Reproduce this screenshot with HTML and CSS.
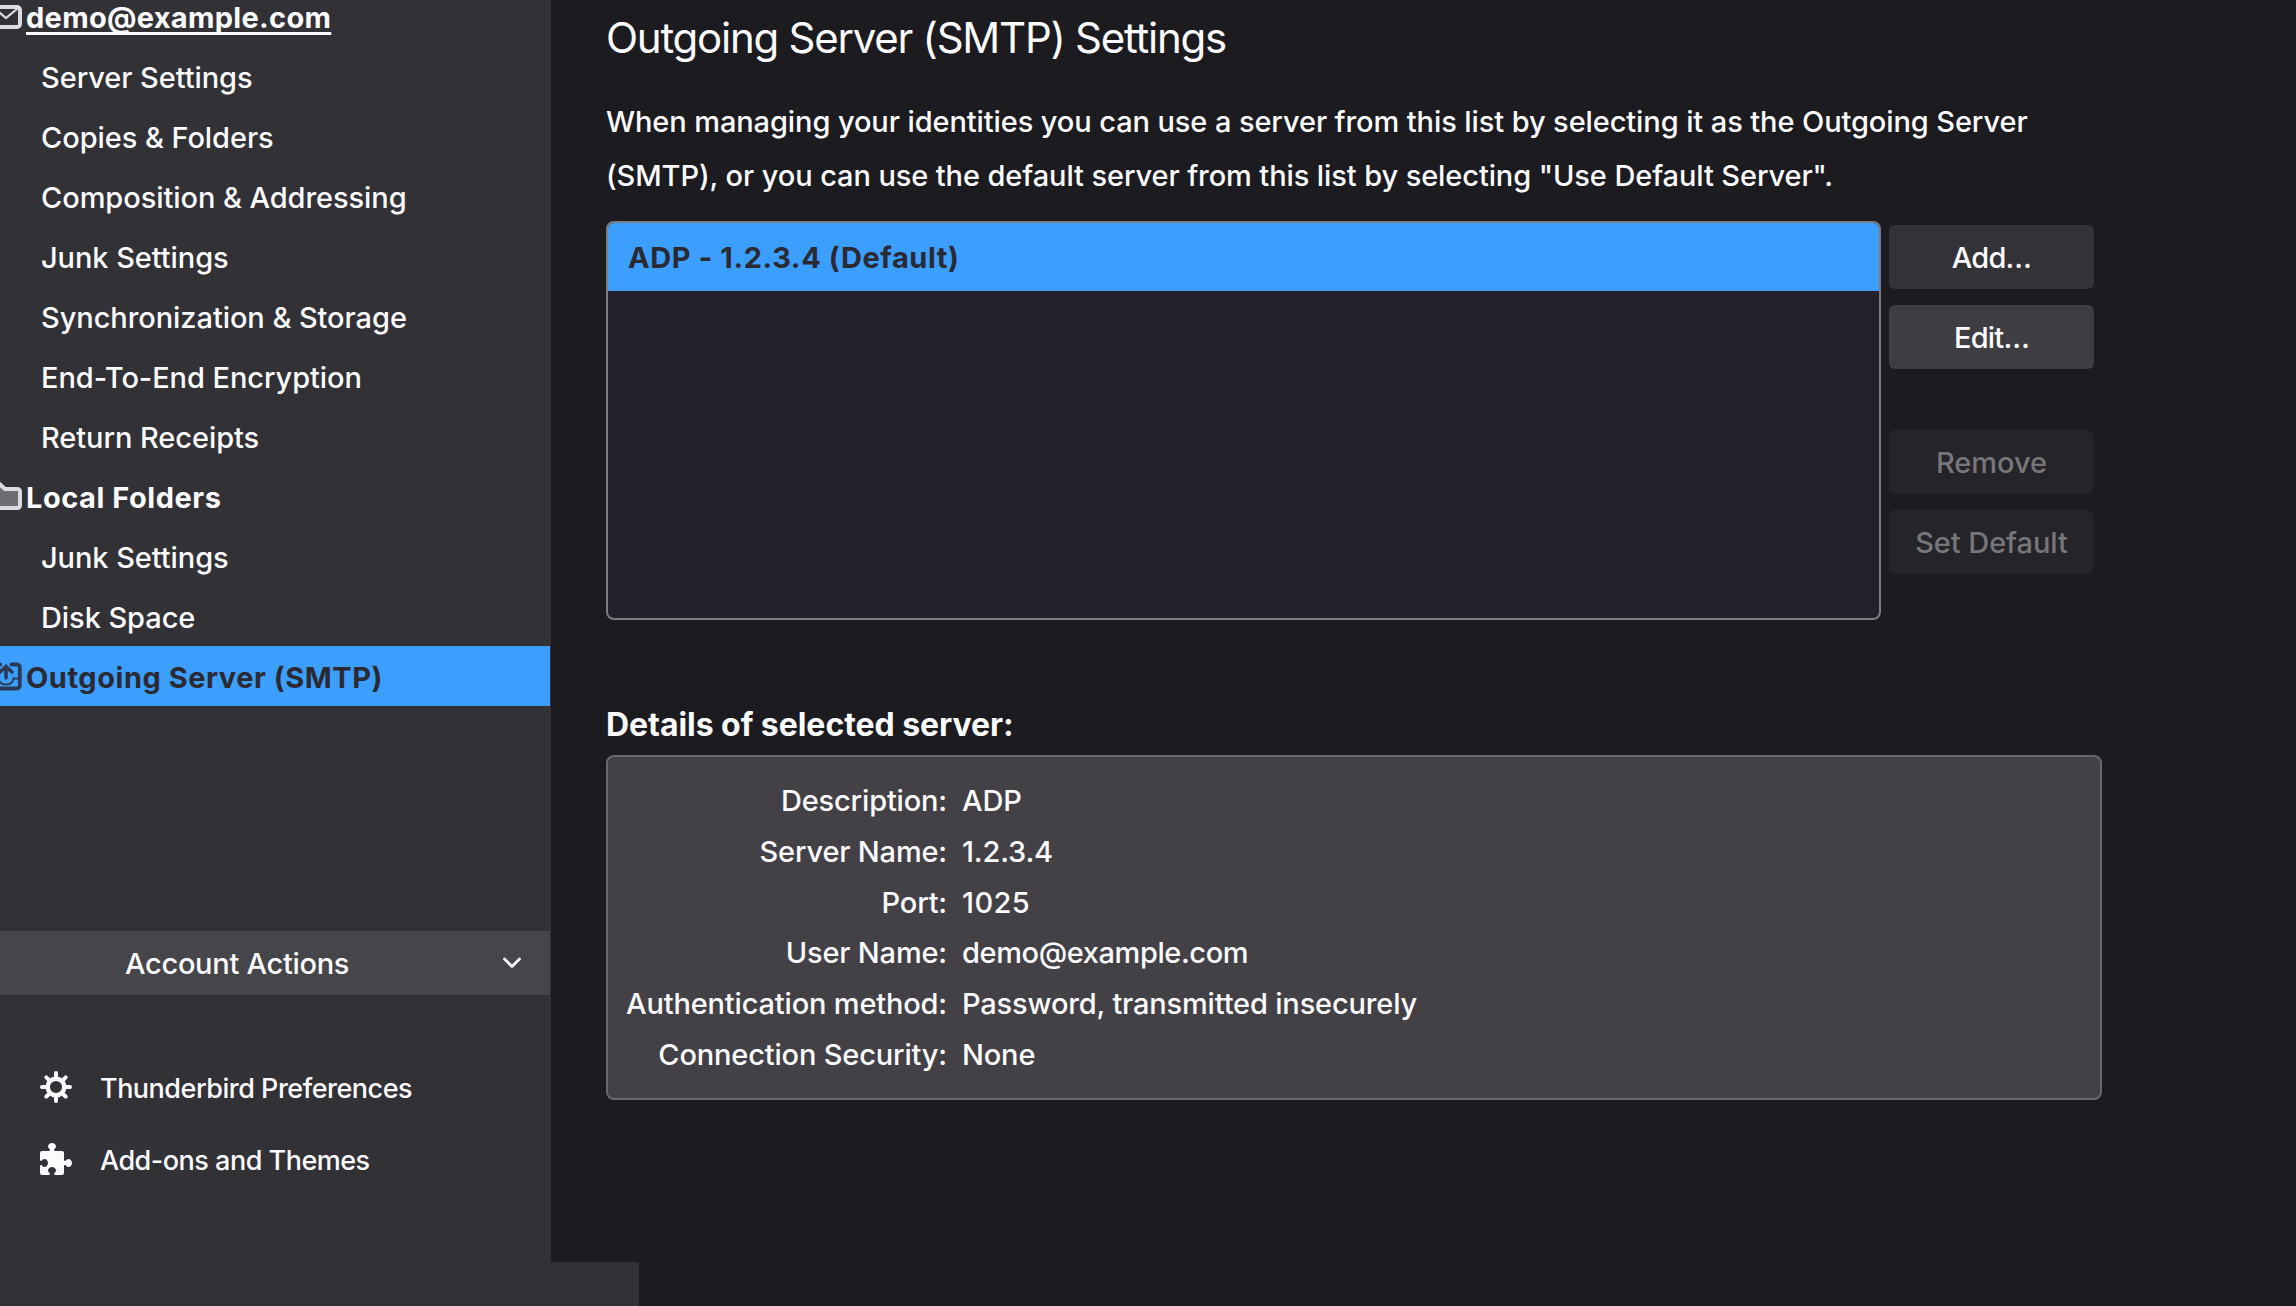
FILE: index.html
```html
<!DOCTYPE html>
<html lang="en">
<head>
<meta charset="utf-8">
<title>Account Settings</title>
<link rel="stylesheet" href="styles.css">
</head>
<body>
<div class="window">
  <div class="columns">
    <aside class="sidebar">
      <ul class="accounts">
        <li class="account current">
          <svg class="account-icon" viewBox="0 0 32 32"><rect x="2" y="7" width="28" height="20" rx="3" fill="none" stroke="#dcdbe0" stroke-width="4"/><path d="M4.500 8.500 16 18l11.500-9.500" fill="none" stroke="#dcdbe0" stroke-width="2.200"/></svg>
          <span>demo@example.com</span>
        </li>
        <li class="page">Server Settings</li>
        <li class="page">Copies &amp; Folders</li>
        <li class="page">Composition &amp; Addressing</li>
        <li class="page">Junk Settings</li>
        <li class="page">Synchronization &amp; Storage</li>
        <li class="page">End-To-End Encryption</li>
        <li class="page">Return Receipts</li>
        <li class="account">
          <svg class="account-icon" viewBox="0 0 32 32"><path d="M2 8a4 4 0 0 1 4-4h3.500L15 9h12.500A2.500 2.500 0 0 1 30 11.500v14a2.500 2.500 0 0 1-2.500 2.500h-23A2.500 2.500 0 0 1 2 25.500z" fill="#6d6c71" stroke="#dcdbe0" stroke-width="4"/></svg>
          <span>Local Folders</span>
        </li>
        <li class="page">Junk Settings</li>
        <li class="page">Disk Space</li>
        <li class="account selected">
          <svg class="account-icon" viewBox="0 0 32 32"><g fill="none" stroke="#2c3a55" stroke-linecap="round"><path d="M21.500 4.500h5A3 3 0 0 1 29.800 7.500v18a3 3 0 0 1-3 3H5.200a3 3 0 0 1-3-3v-18a3 3 0 0 1 3-3h5" stroke-width="3.800"/><path d="M16 18V7M10 12l6-5.500L22 12" stroke-width="3.600"/><path d="M29 18.500h-5.500c-.5 4-3.500 6-7.500 6s-7-2-7.500-6H3" stroke-width="2"/></g></svg>
          <span>Outgoing Server (SMTP)</span>
        </li>
      </ul>
      <div class="actions">
        <span class="actions-label">Account Actions</span>
        <svg class="chevron" viewBox="0 0 20 12"><path d="M2.500 2 10 9.500 17.500 2" fill="none" stroke="#fbfbfe" stroke-width="2.800" stroke-linecap="round" stroke-linejoin="round"/></svg>
      </div>
      <nav class="links">
        <a class="link">
          <svg class="link-icon" viewBox="-16 -16 32 32"><g fill="none" stroke="#fbfbfe"><circle r="8.300" stroke-width="4.400"/><path d="M0-10v-4M0 10v4M-10 0h-4M10 0h4M-7-7l-2.700-2.700M7-7l2.700-2.700M-7 7l-2.700 2.700M7 7l2.700 2.700" stroke-width="4" stroke-linecap="round"/></g></svg>
          <span>Thunderbird Preferences</span>
        </a>
        <a class="link">
          <svg class="link-icon" viewBox="0 0 32 32"><path fill="#fbfbfe" d="M2 8h6.800c1 0 1.400-.8.900-1.700C8.900 5.500 8 4.800 8 3.600 8 1.500 9.800 0 12 0s4 1.500 4 3.600c0 1.200-.9 1.900-1.700 2.700-.5.900-.1 1.700.9 1.700H22a2 2 0 0 1 2 2v6.800c0 1 .8 1.400 1.700.9.800-.8 1.500-1.700 2.700-1.700 2.100 0 3.600 1.800 3.600 4s-1.500 4-3.600 4c-1.200 0-1.900-.9-2.700-1.700-.9-.5-1.700-.1-1.700.9V30a2 2 0 0 1-2 2h-6.800c-1 0-1.400-.8-.9-1.700.8-.8 1.700-1.500 1.700-2.700 0-2.100-1.800-3.600-4-3.600s-4 1.500-4 3.600c0 1.200.9 1.900 1.700 2.700.5.900.1 1.700-.9 1.700H2a2 2 0 0 1-2-2v-6.800c0-1 .8-1.400 1.700-.9.800.8 1.500 1.700 2.700 1.700C6.500 24 8 22.200 8 20s-1.500-4-3.600-4c-1.200 0-1.900.9-2.700 1.700-.9.500-1.700.1-1.700-.9V10a2 2 0 0 1 2-2z"/></svg>
          <span>Add-ons and Themes</span>
        </a>
      </nav>
    </aside>
    <main class="content">
      <h1 class="title">Outgoing Server (SMTP) Settings</h1>
      <p class="intro">When managing your identities you can use a server from this list by selecting it as the Outgoing Server (SMTP), or you can use the default server from this list by selecting "Use Default Server".</p>
      <section class="servers">
        <div class="server-list">
          <div class="server">ADP - 1.2.3.4 (Default)</div>
        </div>
        <div class="buttons">
          <button class="button short">Add…</button>
          <button class="button short hovered">Edit…</button>
          <button class="button disabled first-disabled">Remove</button>
          <button class="button disabled">Set Default</button>
        </div>
      </section>
      <h2 class="subtitle">Details of selected server:</h2>
      <dl class="details">
        <dt>Description:</dt><dd>ADP</dd>
        <dt>Server Name:</dt><dd>1.2.3.4</dd>
        <dt>Port:</dt><dd class="port">1025</dd>
        <dt>User Name:</dt><dd class="email">demo@example.com</dd>
        <dt>Authentication method:</dt><dd>Password, transmitted insecurely</dd>
        <dt>Connection Security:</dt><dd>None</dd>
      </dl>
    </main>
  </div>
  <div class="status"></div>
</div>
</body>
</html>
```
FILE: styles.css
```css
* {
  box-sizing: border-box;
  margin: 0;
  padding: 0;
}

body {
  background: #1c1b20;
  color: #fbfbfe;
  font: 450 29px Inter, "Liberation Sans", sans-serif;
  letter-spacing: -0.07px;
}

.window {
  display: flex;
  flex-direction: column;
  width: 2296px;
  height: 1306px;
  overflow: hidden;
}

.columns {
  display: flex;
  height: 1262px;
}

.status {
  width: 639px;
  height: 44px;
  background: #323136;
}

/* Sidebar */
.sidebar {
  display: flex;
  flex-direction: column;
  width: 551px;
  padding-right: 1px;
  background: #323136;
}

.accounts {
  margin-top: -14px;
  list-style: none;
}

.accounts li {
  height: 60px;
  padding-top: 3px;
  line-height: 58px;
  white-space: nowrap;
}

.accounts .page {
  padding-left: 41px;
}

.accounts .account {
  display: flex;
  align-items: center;
  gap: 4px;
  padding-top: 4px;
  line-height: 56px;
  font-weight: 700;
  letter-spacing: 0.53px;
}

.account-icon {
  flex: none;
  width: 32px;
  height: 32px;
  margin: 0 0 4px -10px;
}

.accounts .current {
  padding-top: 3px;
  letter-spacing: 0.3px;
}

.current .account-icon {
  margin-bottom: 3px;
}

.current span {
  text-decoration: underline;
  text-decoration-thickness: 3px;
  text-underline-offset: 4px;
  text-decoration-skip-ink: none;
}

.selected {
  background: #3c9ffd;
  color: #2b2a33;
}

.actions {
  display: flex;
  align-items: center;
  justify-content: space-between;
  height: 64px;
  margin-top: 225px;
  padding: 0 28px 0 125px;
  background: #464549;
  letter-spacing: -0.3px;
}

.chevron {
  width: 20px;
  height: 12px;
}

.links {
  margin-top: 56px;
}

.link {
  display: flex;
  align-items: center;
  gap: 28px;
  height: 72px;
  padding-left: 40px;
  font-size: 27px;
  letter-spacing: -0.5px;
}

.link span {
  padding-top: 2px;
}

.link-icon {
  width: 32px;
  height: 32px;
}

/* Content */
.content {
  width: 1745px;
  padding: 13px 0 0 55px;
}

.title {
  font-size: 42px;
  font-weight: 400;
  line-height: 50px;
  letter-spacing: -1.25px;
}

.intro {
  width: 1480px;
  margin-top: 32px;
  line-height: 54px;
  letter-spacing: -0.1px;
}

.servers {
  display: flex;
  gap: 8px;
  margin-top: 18px;
}

.server-list {
  width: 1275px;
  height: 399px;
  border: 2px solid #7d7c80;
  border-radius: 8px;
  background: #23212a;
  overflow: hidden;
}

.server {
  height: 68px;
  padding: 2px 0 0 20px;
  background: #3c9ffd;
  color: #2b2a33;
  font-weight: 700;
  line-height: 66px;
  letter-spacing: 0.6px;
}

.buttons {
  display: flex;
  flex-direction: column;
  gap: 16px;
  padding-top: 4px;
}

.button {
  width: 205px;
  height: 64px;
  border: 0;
  border-radius: 6px;
  background: #333237;
  color: #fbfbfe;
  font: inherit;
  letter-spacing: inherit;
}

.short {
  letter-spacing: -0.8px;
}

.hovered {
  background: #3e3d42;
}

.disabled {
  background: #252429;
  color: #77767a;
}

.first-disabled {
  margin-top: 45px;
}

.subtitle {
  margin-top: 86px;
  font-size: 32px;
  font-weight: 700;
  line-height: 38px;
  letter-spacing: -0.05px;
}

.details {
  display: grid;
  grid-template-columns: 321px 1fr;
  grid-auto-rows: 50.8px;
  column-gap: 15px;
  width: 1496px;
  height: 345px;
  margin-top: 11px;
  padding: 18px;
  border: 2px solid #69686d;
  border-radius: 8px;
  background: #434146;
  line-height: 51px;
  white-space: nowrap;
}

.details dt {
  text-align: right;
  letter-spacing: -0.17px;
}

.details dd {
  letter-spacing: -0.17px;
}

.details .port {
  letter-spacing: 0.4px;
}

.details .email {
  letter-spacing: -0.4px;
}
```
